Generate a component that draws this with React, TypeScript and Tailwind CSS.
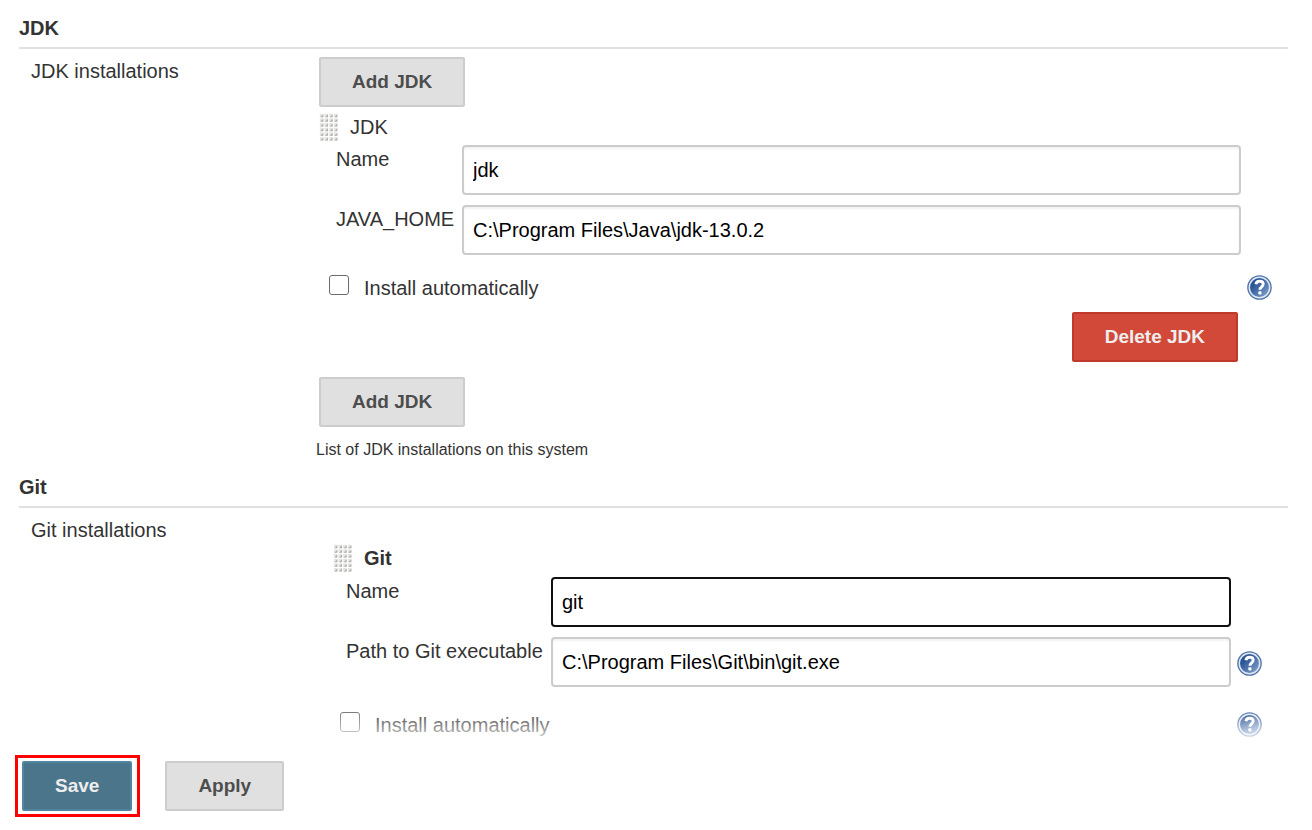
import { useState } from 'react';
import type { ReactNode } from 'react';
import clsx from 'clsx';

// Dotted drag handle
function DragHandle() {
  const cols = [0, 1, 2, 3];
  const rows = [0, 1, 2, 3, 4, 5];
  return (
    <svg viewBox="0 0 16 24" className="h-7 w-[19px] shrink-0 cursor-move" aria-hidden="true">
      {rows.map((r) =>
        cols.map((c) => (
          <g key={`${r}-${c}`}>
            <rect x={c * 4 + 0.6} y={r * 4 + 0.6} width="3" height="3" fill="#e4e4e2" />
            <path d={`M${c * 4 + 3.6} ${r * 4 + 1}v2.6h-2.6z`} fill="#b0b0ad" />
          </g>
        ))
      )}
    </svg>
  );
}

function HelpButton({ topic }: { topic: string }) {
  return (
    <button type="button" aria-label={`Help for ${topic}`} className="h-[25px] w-[25px] shrink-0 cursor-pointer">
      <svg viewBox="0 0 25 25" className="h-full w-full">
        <defs>
          <linearGradient id="help-fill" x1="0" y1="0" x2="1" y2="1">
            <stop offset="0.3" stopColor="#2a5596" />
            <stop offset="1" stopColor="#8fabd4" />
          </linearGradient>
        </defs>
        <circle cx="12.5" cy="12.5" r="12.3" fill="#4f74aa" />
        <circle cx="12.5" cy="12.5" r="10.2" fill="url(#help-fill)" stroke="#dfe7f2" strokeWidth="1.5" />
        <path
          d="M8.9 9.2C9.2 7 10.6 6.2 12.6 6.2c2.2 0 3.6 1.1 3.6 2.9 0 2.7-3.3 2.7-3.3 5.6"
          fill="none"
          stroke="#fff"
          strokeWidth="2.9"
        />
        <rect x="11.3" y="16.2" width="3.2" height="3.2" rx="0.8" fill="#fff" />
      </svg>
    </button>
  );
}

const variants = {
  default: 'border-[#cccccc] bg-[#e0e0e0] text-[#4d4d4d]',
  danger: 'border-[#bf3a2b] bg-[#d24939] text-[#eeeeee]',
  primary: 'border-[#5186a0] bg-[#4b758b] text-[#eeeeee]',
};

interface ButtonProps {
  children: ReactNode;
  variant?: keyof typeof variants;
  type?: 'button' | 'submit';
}

function Button({ children, variant = 'default', type = 'button' }: ButtonProps) {
  return (
    <button
      type={type}
      className={clsx('h-[50px] cursor-pointer rounded-xs border-2 px-[31px] text-[19px] leading-7 font-bold', variants[variant])}
    >
      {children}
    </button>
  );
}

interface TextFieldProps {
  id: string;
  label: string;
  initial: string;
  labelClass: string;
  active?: boolean;
  help?: boolean;
}

function TextField({ id, label, initial, labelClass, active, help }: TextFieldProps) {
  const [value, setValue] = useState(initial);
  return (
    <div className="flex gap-[6px]">
      <div className="flex min-w-0 flex-1">
        <label htmlFor={id} className={clsx('shrink-0 whitespace-nowrap', labelClass)}>
          {label}
        </label>
        <input
          id={id}
          type="text"
          value={value}
          onChange={(e) => setValue(e.target.value)}
          className={clsx(
            'h-[50px] min-w-0 flex-1 rounded-sm border-2 bg-white px-[9px] text-black outline-none focus:border-[#101010]',
            active ? 'border-[#101010]' : 'border-[#cccccc] shadow-[inset_0_2px_2px_rgba(0,0,0,0.05)]'
          )}
        />
      </div>
      <div className="flex w-[25px] shrink-0 items-center pt-0.5">{help && <HelpButton topic={label} />}</div>
    </div>
  );
}

function InstallOption({ id }: { id: string }) {
  const [checked, setChecked] = useState(false);
  return (
    <div className="flex items-start">
      <input
        id={id}
        type="checkbox"
        checked={checked}
        onChange={(e) => setChecked(e.target.checked)}
        className="h-5 w-5 shrink-0 appearance-none rounded-[3px] border border-[#6b6b6b] bg-white checked:bg-[#0075ff]"
      />
      <label htmlFor={id} className="flex-1 pl-[15px] leading-[26px]">
        Install automatically
      </label>
      <HelpButton topic="Install automatically" />
    </div>
  );
}

function Section({ title, label, children }: { title: string; label: string; children: ReactNode }) {
  return (
    <section>
      <h2 className="border-b-2 border-[#e0e0e0] pb-[5px] font-bold">{title}</h2>
      <div className="flex pt-2">
        <div className="w-[297px] shrink-0 pl-3">{label}</div>
        <div className="min-w-0 flex-1">{children}</div>
      </div>
    </section>
  );
}

export default function App() {
  return (
    <form
      onSubmit={(e) => e.preventDefault()}
      className="min-h-screen bg-white font-['Liberation_Sans',Arial,sans-serif] text-[20px] leading-7 text-[#333333]"
    >
      <main className="flex flex-col gap-[11px] pt-[14px] pr-6 pl-[19px]">
        <Section title="JDK" label="JDK installations">
          <div className="pl-[3px]">
            <Button>Add JDK</Button>
          </div>
          <div className="flex items-center gap-3 pt-[6px] pb-1 pl-[3px]">
            <DragHandle />
            <span>JDK</span>
          </div>
          <div className="flex flex-col gap-[10px] pr-4 pl-5">
            <TextField id="jdk-name" label="Name" initial="jdk" labelClass="w-[126px]" />
            <TextField id="jdk-home" label="JAVA_HOME" initial={'C:\\Program Files\\Java\\jdk-13.0.2'} labelClass="w-[126px]" />
          </div>
          <div className="pt-5 pr-4 pl-[13px]">
            <InstallOption id="jdk-auto" />
          </div>
          <div className="flex justify-end pt-[11px] pr-[50px]">
            <Button variant="danger">Delete JDK</Button>
          </div>
          <div className="pt-[15px] pl-[3px]">
            <Button>Add JDK</Button>
          </div>
          <p className="pt-[11px] text-[16px] leading-6">List of JDK installations on this system</p>
        </Section>

        <Section title="Git" label="Git installations">
          <div className="flex items-center gap-3 pt-7 pb-[5px] pl-[17px]">
            <DragHandle />
            <span className="font-bold">Git</span>
          </div>
          <div className="flex flex-col gap-[10px] pr-[26px] pl-[30px]">
            <TextField id="git-name" label="Name" initial="git" labelClass="w-[205px]" active />
            <TextField
              id="git-path"
              label="Path to Git executable"
              initial={'C:\\Program Files\\Git\\bin\\git.exe'}
              labelClass="w-[205px]"
              help
            />
          </div>
          <div className="pt-[25px] pr-[26px] pl-6">
            <InstallOption id="git-auto" />
          </div>
        </Section>
      </main>

      {/* Sticky action bar, the form fades out underneath it */}
      <footer className="pointer-events-none sticky bottom-0 -mt-[30px]">
        <div className="h-10 bg-linear-to-b from-white/0 to-white" />
        <div className="pointer-events-auto flex items-center gap-[25px] bg-white pt-[7px] pb-[13px] pl-[15px]">
          <div className="border-[3px] border-[#ff0000] py-[3px] pr-[5px] pl-1">
            <Button variant="primary" type="submit">
              Save
            </Button>
          </div>
          <Button>Apply</Button>
        </div>
      </footer>
    </form>
  );
}
